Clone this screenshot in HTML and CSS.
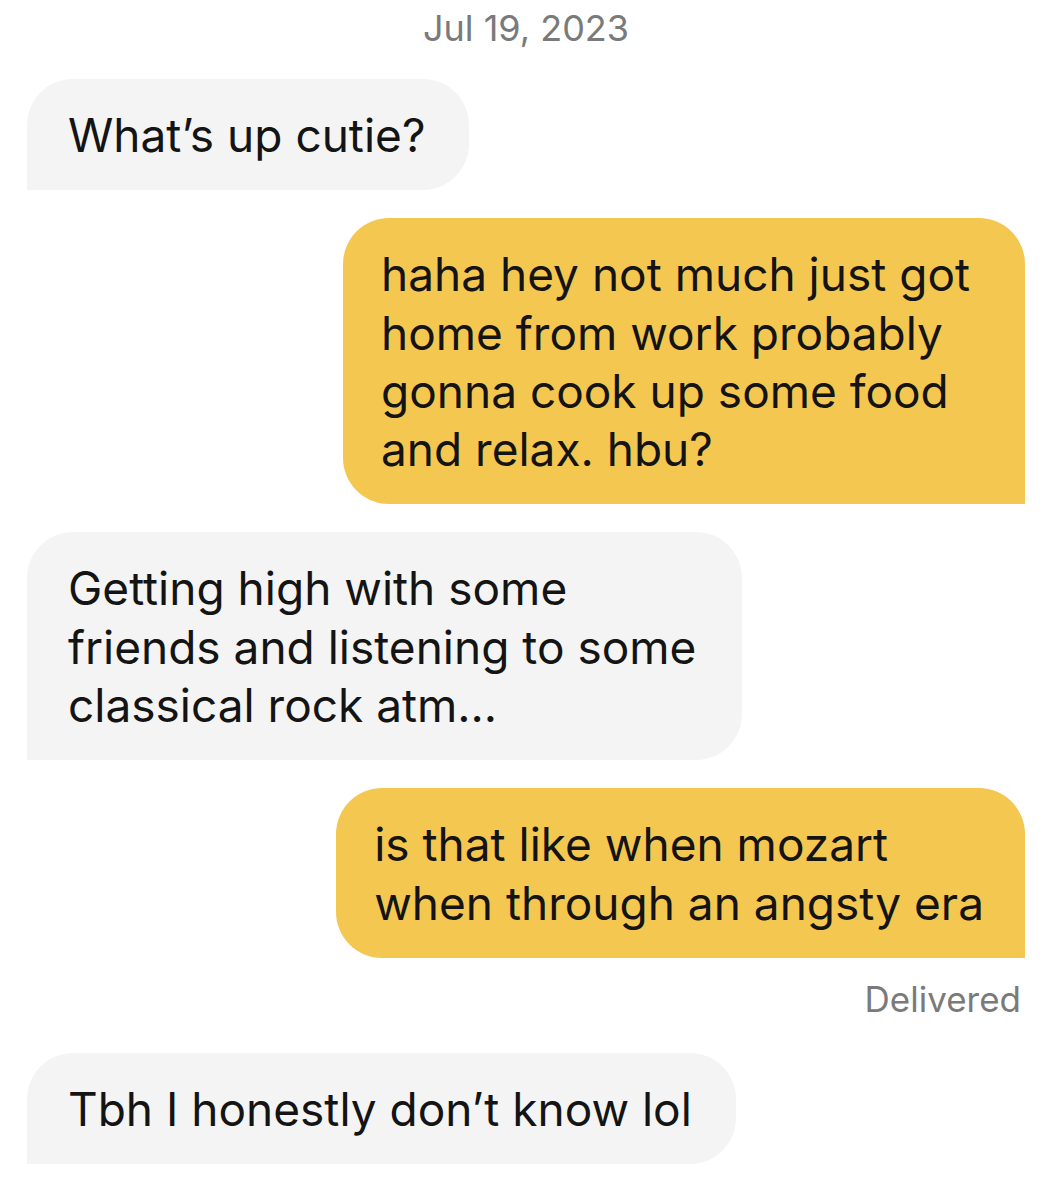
FILE: index.html
```html
<!DOCTYPE html>
<html lang="en">
<head>
<meta charset="utf-8">
<title>Chat</title>
<link rel="stylesheet" href="styles.css">
</head>
<body>
<main class="chat">
  <div class="date">Jul 19, 2023</div>

  <div class="row row-in">
    <div class="bubble in">What’s up cutie?</div>
  </div>

  <div class="row row-out">
    <div class="bubble out b-wide2">haha hey not much just got<br>home from work probably<br>gonna cook up some food<br>and relax. hbu?</div>
  </div>

  <div class="row row-in">
    <div class="bubble in b-wide3">Getting high with some<br>friends and listening to some<br>classical rock atm...</div>
  </div>

  <div class="row row-out">
    <div class="bubble out">is that like when mozart<br>when through an angsty era</div>
  </div>

  <div class="status">Delivered</div>

  <div class="row row-in">
    <div class="bubble in">Tbh I honestly don’t know lol</div>
  </div>
</main>
</body>
</html>
```

FILE: styles.css
```css
html, body {
  margin: 0;
  padding: 0;
  background: #ffffff;
}

body {
  font-family: Inter, "Noto Sans", "Liberation Sans", sans-serif;
  color: #141414;
}

.chat {
  display: flex;
  flex-direction: column;
  padding: 8px 27px 40px;
}

.date {
  text-align: center;
  font-size: 36px;
  line-height: 40px;
  color: #7a7a7a;
  margin-bottom: 31px;
}

.row {
  display: flex;
  margin-bottom: 28px;
}

.row-in {
  justify-content: flex-start;
}

.row-out {
  justify-content: flex-end;
}

.bubble {
  font-size: 46px;
  line-height: 58.3px;
  padding: 27px 41px 26px 41px;
  border-radius: 46px;
  white-space: nowrap;
}

.in {
  background: #f4f4f4;
  border-bottom-left-radius: 0;
  padding-right: 44px;
}

.out {
  background: #f4c750;
  border-bottom-right-radius: 0;
  padding-left: 38px;
}

.b-wide2 {
  min-width: 603px;
}

.b-wide3 {
  min-width: 630px;
}

.status {
  text-align: right;
  font-size: 35px;
  line-height: 38px;
  color: #7a7a7a;
  margin-top: -6px;
  padding-right: 4px;
  margin-bottom: 35px;
}
```
